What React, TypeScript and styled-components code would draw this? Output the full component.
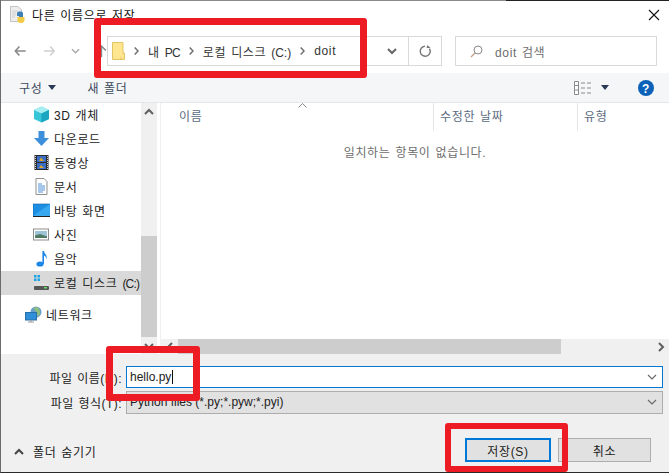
import React from 'react';
import styled, { createGlobalStyle } from 'styled-components';

const GlobalStyle = createGlobalStyle`
  html, body {
    margin: 0;
    padding: 0;
    background: #fff;
  }
  * {
    box-sizing: border-box;
  }
`;

const Dialog = styled.div`
  position: relative;
  width: 669px;
  height: 473px;
  overflow: hidden;
  display: flex;
  flex-direction: column;
  background: #fff;
  border-left: 1px solid #6b6b6b;
  border-bottom: 1px solid #2a2a2a;
  font-family: 'Liberation Sans', 'Noto Sans CJK KR', sans-serif;
  font-size: 12px;
  letter-spacing: 0.65px;
  word-spacing: 1px;
  color: #1a1a1a;
`;

const TopEdge = styled.div`
  height: 1px;
  flex: none;
  background: linear-gradient(to right, #8a8a8a 505px, #222 505px);
`;

const TitleBar = styled.div`
  height: 34px;
  flex: none;
  display: flex;
  align-items: center;
  padding: 0 9px 7px 8px;
  gap: 6px;
`;

const TitleText = styled.span`
  flex: 1;
  color: #111;
`;

const NavRow = styled.div`
  height: 38px;
  flex: none;
  display: flex;
  align-items: flex-start;
  padding: 1px 12px 0 13px;
`;

const NavButtons = styled.div`
  width: 93px;
  height: 30px;
  flex: none;
  display: flex;
  align-items: center;
  gap: 16px;
`;

const AddressBar = styled.div`
  width: 335px;
  height: 30px;
  flex: none;
  display: flex;
  align-items: stretch;
  border: 1px solid #d9d9d9;
`;

const Crumbs = styled.div`
  flex: 1;
  display: flex;
  align-items: center;
  padding-left: 4px;
  gap: 9px;
  color: #333;
`;

// latin bits of a korean label sit tighter than the hangul around them
const Latin = styled.span<{ $tight?: boolean }>`
  letter-spacing: ${(p) => (p.$tight ? '-0.8px' : '0')};
`;

const AddressButton = styled.div<{ $divided?: boolean }>`
  width: 33px;
  display: flex;
  align-items: center;
  justify-content: center;
  border-left: ${(p) => (p.$divided ? '1px solid #d9d9d9' : 'none')};
`;

const SearchBox = styled.div`
  width: 202px;
  height: 30px;
  margin-left: 13px;
  flex: none;
  display: flex;
  align-items: center;
  padding-left: 14px;
  gap: 12px;
  border: 1px solid #d9d9d9;
  color: #6d6d6d;
`;

const Toolbar = styled.div`
  height: 30px;
  flex: none;
  display: flex;
  align-items: center;
  padding: 0 15px 0 18px;
  background: #f5f6f7;
  border-bottom: 1px solid #e6e6e6;
  color: #3b4a5e;
`;

const ToolLabel = styled.span`
  display: flex;
  align-items: center;
  gap: 6px;
`;

const NewFolder = styled.span`
  margin-left: 31px;
  flex: 1;
`;

const Browser = styled.div`
  height: 251px;
  flex: none;
  display: flex;
  position: relative;
`;

const Sidebar = styled.div`
  width: 140px;
  flex: none;
  display: flex;
  flex-direction: column;
`;

const NavItem = styled.div<{ $selected?: boolean; $top?: boolean }>`
  height: 24px;
  flex: none;
  display: flex;
  align-items: center;
  gap: 4px;
  padding-bottom: 2px;
  padding-left: ${(p) => (p.$top ? '24px' : '32px')};
  margin-top: ${(p) => (p.$top ? '8px' : '0')};
  background: ${(p) => (p.$selected ? '#d9d9d9' : 'transparent')};
  color: #222;
  white-space: nowrap;
  overflow: hidden;
`;

const NavIcon = styled.span`
  width: 17px;
  height: 17px;
  flex: none;
  display: block;
`;

const ScrollTrack = styled.div`
  width: 16px;
  flex: none;
  display: flex;
  flex-direction: column;
  background: #f0f0f0;
`;

const ScrollArrow = styled.div`
  height: 17px;
  flex: none;
  display: flex;
  align-items: center;
  justify-content: center;
`;

const ScrollGap = styled.div`
  height: 116px;
  flex: none;
`;

const ScrollThumb = styled.div`
  flex: 1;
  background: #cdcdcd;
`;

const Splitter = styled.div`
  width: 4px;
  flex: none;
  background: #fff;
  border-right: 1px solid #f0f0f0;
`;

const ListPane = styled.div`
  flex: 1;
  display: flex;
  flex-direction: column;
  position: relative;
`;

const ListHeader = styled.div`
  height: 28px;
  flex: none;
  display: grid;
  grid-template-columns: 272px 144px 1fr;
  position: relative;
  color: #5b6b7f;
`;

const HeaderCell = styled.div<{ $first?: boolean }>`
  display: flex;
  align-items: center;
  padding: 0 0 3px ${(p) => (p.$first ? '18px' : '6px')};
  border-left: ${(p) => (p.$first ? 'none' : '1px solid #e5e5e5')};
`;

const SortMark = styled.svg`
  position: absolute;
  left: 137px;
  top: 0;
`;

const EmptyNote = styled.div`
  text-align: center;
  padding-top: 12px;
  color: #6d6d6d;
`;

const HScroll = styled.div`
  position: absolute;
  left: 0;
  right: 0;
  bottom: 0;
  height: 15px;
  display: flex;
  background: #f0f0f0;
`;

const HArrow = styled.div`
  width: 17px;
  flex: none;
  display: flex;
  align-items: center;
  justify-content: center;
`;

const HThumb = styled.div`
  width: 383px;
  flex: none;
  background: #cdcdcd;
`;

const HFill = styled.div`
  flex: 1;
`;

const Footer = styled.div`
  flex: 1;
  background: #f0f0f0;
  display: flex;
  flex-direction: column;
  padding-top: 12px;
`;

const FieldRow = styled.div`
  height: 22px;
  margin-bottom: 3px;
  flex: none;
  display: flex;
  align-items: center;
  padding-right: 6px;
`;

const FieldLabel = styled.label`
  width: 125px;
  flex: none;
  padding-right: 4px;
  text-align: right;
  letter-spacing: 0.45px;
  color: #222;
`;

const FieldBox = styled.div<{ $active?: boolean }>`
  flex: 1;
  height: ${(p) => (p.$active ? '22px' : '23px')};
  display: flex;
  align-items: center;
  justify-content: space-between;
  padding: 0 5px 0 3px;
  border: 1px solid ${(p) => (p.$active ? '#0078d7' : '#adadad')};
  background: ${(p) => (p.$active ? '#fff' : '#e1e1e1')};
  color: #222;
  letter-spacing: 0;
  word-spacing: 0;
`;

const Caret = styled.span`
  display: inline-block;
  width: 1px;
  height: 14px;
  margin-left: 1px;
  vertical-align: -3px;
  background: #111;
`;

const FooterBar = styled.div`
  flex: 1;
  display: flex;
  align-items: flex-start;
  justify-content: space-between;
  padding: 22px 18px 0 13px;
`;

const HideFolders = styled.div`
  display: flex;
  align-items: center;
  gap: 9px;
  height: 28px;
  padding-bottom: 1px;
  color: #222;
`;

const Buttons = styled.div`
  display: flex;
  gap: 7px;
`;

const DialogButton = styled.button<{ $primary?: boolean }>`
  width: ${(p) => (p.$primary ? '86px' : '93px')};
  height: 24px;
  padding: 0;
  background: #e1e1e1;
  border: ${(p) => (p.$primary ? '2px solid #0078d7' : '1px solid #adadad')};
  font: inherit;
  letter-spacing: inherit;
  color: #222;
`;

const Highlight = styled.div<{ $x: number; $y: number; $w: number; $h: number; $b: number }>`
  position: absolute;
  left: ${(p) => p.$x}px;
  top: ${(p) => p.$y}px;
  width: ${(p) => p.$w}px;
  height: ${(p) => p.$h}px;
  border: ${(p) => p.$b}px solid #ed1c24;
  border-radius: 3px;
  pointer-events: none;
`;

const Chevron = ({ dir, color = '#555', weight = 1.6 }: { dir: 'down' | 'up' | 'left' | 'right'; color?: string; weight?: number }) => {
  const paths = {
    down: 'M1 3 L5 7 L9 3',
    up: 'M1 7 L5 3 L9 7',
    left: 'M7 1 L3 5 L7 9',
    right: 'M3 1 L7 5 L3 9',
  };
  return (
    <svg width="10" height="10" viewBox="0 0 10 10">
      <path d={paths[dir]} fill="none" stroke={color} strokeWidth={weight} />
    </svg>
  );
};

const CrumbArrow = () => (
  <svg width="5" height="8" viewBox="0 0 5 8">
    <path d="M.7 .5L4 4L.7 7.5" fill="none" stroke="#707070" strokeWidth="1.5" />
  </svg>
);

const FolderIcon = () => (
  <svg width="13" height="18" viewBox="0 0 13 18">
    <path d="M0.5 0.5H11V17.5H0.5Z" fill="#fde68f" stroke="#e3c463" />
    <path d="M11 11H12.5V17.5H9V15" fill="#fde68f" stroke="#e3c463" />
  </svg>
);

const PythonDocIcon = () => (
  <svg width="17" height="18" viewBox="0 0 17 18">
    <path d="M1.5 .5H9L12.5 4V15.5H1.5Z" fill="#eeeeee" stroke="#c4c4c4" />
    <path d="M3 5H9M3 7H7M3 9H7M3 11H6" stroke="#d0d0d0" />
    <path d="M8 10V7.5C8 6 9 5.5 11 5.5C13 5.5 14 6 14 7.5V11H10V10Z" fill="#3f7fb5" />
    <path d="M8 11H15.5V14C15.5 16 14 17 12 17C10 17 8.5 16 8.5 15V12Z" fill="#f3cb45" />
  </svg>
);

const Cube = () => (
  <svg width="17" height="17" viewBox="0 0 17 17">
    <path d="M8.5 .5L16 4V13L8.5 16.5L1 13V4Z" fill="#37c5d8" />
    <path d="M8.5 .5L16 4L8.5 7.5L1 4Z" fill="#a7eef3" />
    <path d="M8.5 7.5L16 4V13L8.5 16.5Z" fill="#1aa5c0" />
  </svg>
);

const DownArrow = () => (
  <svg width="17" height="17" viewBox="0 0 17 17">
    <path d="M5.5 1H11.5V8H16L8.5 16L1 8H5.5Z" fill="#3d8fdc" />
  </svg>
);

const Film = () => (
  <svg width="17" height="17" viewBox="0 0 17 17">
    <rect x="1.5" y="1" width="14" height="15" fill="#2a2a2a" />
    <rect x="4" y="2" width="9" height="6" fill="#3b6dc4" />
    <rect x="4" y="9" width="9" height="6" fill="#3b6dc4" />
    <path d="M6 7L8 3.5L11 7Z M6 14L8 11L11 14Z" fill="#d8a52c" />
    <path d="M2.5 2V15M14.5 2V15" stroke="#cfcfcf" strokeDasharray="1 1" />
  </svg>
);

const Doc = () => (
  <svg width="17" height="17" viewBox="0 0 17 17">
    <path d="M3 .5H11L14 3.5V16.5H3Z" fill="#fff" stroke="#8f8f8f" />
    <path d="M5 6H9M5 8H12M5 10H12M5 12H12M5 14H10" stroke="#4c8fd6" />
  </svg>
);

const Desktop = () => (
  <svg width="17" height="17" viewBox="0 0 17 17">
    <rect x="0" y="2" width="17" height="12" fill="#1c8fe3" stroke="#0d5fa8" strokeWidth=".6" />
    <path d="M0 14L17 2V14Z" fill="#38a8f0" />
    <rect x="0" y="14" width="17" height="1" fill="#222" />
  </svg>
);

const Photo = () => (
  <svg width="17" height="17" viewBox="0 0 17 17">
    <rect x=".5" y="3" width="15" height="11" fill="#fff" stroke="#8e8e8e" />
    <rect x="2" y="5" width="12" height="7" fill="#9cc3d8" />
    <path d="M2 12V9.5L7 8L14 10.5V12Z" fill="#4f7a63" />
  </svg>
);

const Note = () => (
  <svg width="17" height="17" viewBox="0 0 17 17">
    <ellipse cx="7" cy="14" rx="3.6" ry="2.6" fill="#1b87e6" />
    <path d="M9.4 14V1H11C11.3 4 14.5 5 13.6 9C13 6.5 12 6 11 5.5V14Z" fill="#1b87e6" />
  </svg>
);

const Disk = () => (
  <svg width="17" height="17" viewBox="0 0 17 17">
    <path d="M1 1H3.5V3.5H1ZM4.5 1H7V3.5H4.5ZM1 4.5H3.5V7H1ZM4.5 4.5H7V7H4.5Z" fill="#1aa3e8" />
    <path d="M3 9H14L16 12H1Z" fill="#dedede" />
    <rect x="1" y="12" width="15" height="4" rx="1" fill="#555" />
    <rect x="11" y="13" width="3" height="1.5" fill="#5fe05f" />
  </svg>
);

const Network = () => (
  <svg width="17" height="17" viewBox="0 0 17 17">
    <circle cx="11" cy="6" r="5.5" fill="#6c9fc7" />
    <path d="M8 2C11 4 12 6 9 9L14 10C16 6 15 3 12 1Z" fill="#8fbf7d" />
    <rect x=".5" y="6.5" width="11" height="7.5" fill="#2f8fd8" stroke="#2a6ea8" />
    <path d="M6 14V16M3 16H9" stroke="#9a9a9a" />
  </svg>
);

const navItems = [
  { label: <>3D 개체</>, icon: <Cube /> },
  { label: <>다운로드</>, icon: <DownArrow /> },
  { label: <>동영상</>, icon: <Film /> },
  { label: <>문서</>, icon: <Doc /> },
  { label: <>바탕 화면</>, icon: <Desktop /> },
  { label: <>사진</>, icon: <Photo /> },
  { label: <>음악</>, icon: <Note /> },
  { label: <>로컬 디스크 <Latin $tight>(C:)</Latin></>, icon: <Disk />, selected: true },
];

export default function App() {
  return (
    <>
      <GlobalStyle />
      <Dialog>
        <TopEdge />
        <TitleBar>
          <PythonDocIcon />
          <TitleText>다른 이름으로 저장</TitleText>
          <svg width="12" height="12" viewBox="0 0 12 12">
            <path d="M1 1L11 11M11 1L1 11" stroke="#111" strokeWidth="1.1" />
          </svg>
        </TitleBar>

        <NavRow>
          <NavButtons>
            <svg width="14" height="12" viewBox="0 0 14 12">
              <path d="M6 1L1.5 6L6 11M2 6H13" fill="none" stroke="#8a8a8a" strokeWidth="1.8" />
            </svg>
            <svg width="14" height="12" viewBox="0 0 14 12">
              <path d="M8 1L12.5 6L8 11M12 6H1" fill="none" stroke="#cfcfcf" strokeWidth="1.8" />
            </svg>
            <Chevron dir="down" color="#aaa" />
            <svg width="12" height="14" viewBox="0 0 12 14">
              <path d="M1 6.5L6 1.5L11 6.5M6 2V14" fill="none" stroke="#8a8a8a" strokeWidth="1.8" />
            </svg>
          </NavButtons>
          <AddressBar>
            <Crumbs>
              <FolderIcon />
              <CrumbArrow />
              <span>내 <Latin $tight>PC</Latin></span>
              <CrumbArrow />
              <span>로컬 디스크 <Latin>(C:)</Latin></span>
              <CrumbArrow />
              <span>doit</span>
            </Crumbs>
            <AddressButton>
              <Chevron dir="down" color="#666" weight={2} />
            </AddressButton>
            <AddressButton $divided>
              <svg width="13" height="13" viewBox="0 0 13 13">
                <path d="M3 2.5A5 5 0 1 0 8 1.8" fill="none" stroke="#777" strokeWidth="1.4" transform="rotate(35 6.5 6.5)" />
                <path d="M8.5 0L11.5 3H7.5Z" fill="#777" />
              </svg>
            </AddressButton>
          </AddressBar>
          <SearchBox>
            <svg width="13" height="13" viewBox="0 0 13 13">
              <circle cx="8" cy="5" r="4" fill="none" stroke="#888" />
              <path d="M5 8L1 12" stroke="#c79a86" strokeWidth="1.2" />
            </svg>
            <span>doit 검색</span>
          </SearchBox>
        </NavRow>

        <Toolbar>
          <ToolLabel>
            구성
            <svg width="8" height="5" viewBox="0 0 8 5">
              <path d="M0 0H8L4 5Z" fill="#2a3a55" />
            </svg>
          </ToolLabel>
          <NewFolder>새 폴더</NewFolder>
          <svg width="17" height="14" viewBox="0 0 17 14">
            <path d="M.5 .5H4.5V13.5H.5ZM.5 4.5H4.5M.5 9H4.5" fill="#fff" stroke="#8a8a8a" />
            <path d="M7 2H11M13 2H17M7 7H11M13 7H17M7 12H11M13 12H17" stroke="#8a8a8a" />
          </svg>
          <svg width="8" height="5" viewBox="0 0 8 5" style={{ marginLeft: 10 }}>
            <path d="M0 0H8L4 5Z" fill="#2a3a55" />
          </svg>
          <svg width="16" height="16" viewBox="0 0 16 16" style={{ marginLeft: 29 }}>
            <circle cx="8" cy="8" r="8" fill="#0b62b8" />
            <text x="8" y="12.5" textAnchor="middle" fontSize="12" fontWeight="700" fill="#fff" fontFamily="Liberation Sans">?</text>
          </svg>
        </Toolbar>

        <Browser>
          <Sidebar>
            {navItems.map((item, i) => (
              <NavItem key={i} $selected={item.selected}>
                <NavIcon>{item.icon}</NavIcon>
                <span>{item.label}</span>
              </NavItem>
            ))}
            <NavItem $top>
              <NavIcon>
                <Network />
              </NavIcon>
              <span>네트워크</span>
            </NavItem>
          </Sidebar>
          <ScrollTrack>
            <ScrollArrow>
              <Chevron dir="up" color="#606060" weight={2} />
            </ScrollArrow>
            <ScrollGap />
            <ScrollThumb />
            <ScrollArrow>
              <Chevron dir="down" color="#606060" weight={2} />
            </ScrollArrow>
          </ScrollTrack>
          <Splitter />
          <ListPane>
            <ListHeader>
              <HeaderCell $first>이름</HeaderCell>
              <HeaderCell>수정한 날짜</HeaderCell>
              <HeaderCell>유형</HeaderCell>
              <SortMark width="9" height="5" viewBox="0 0 9 5">
                <path d="M.5 4.5L4.5 .5L8.5 4.5" fill="none" stroke="#888" />
              </SortMark>
            </ListHeader>
            <EmptyNote>일치하는 항목이 없습니다.</EmptyNote>
            <HScroll>
              <HArrow>
                <Chevron dir="left" color="#606060" weight={2} />
              </HArrow>
              <HThumb />
              <HFill />
              <HArrow>
                <Chevron dir="right" color="#606060" weight={2} />
              </HArrow>
            </HScroll>
          </ListPane>
        </Browser>

        <Footer>
          <FieldRow>
            <FieldLabel>파일 이름(N):</FieldLabel>
            <FieldBox $active>
              <span>
                hello.py
                <Caret />
              </span>
              <Chevron dir="down" color="#666" weight={1.1} />
            </FieldBox>
          </FieldRow>
          <FieldRow>
            <FieldLabel>파일 형식(T):</FieldLabel>
            <FieldBox>
              <span>Python files (*.py;*.pyw;*.pyi)</span>
              <Chevron dir="down" color="#666" weight={1.1} />
            </FieldBox>
          </FieldRow>
          <FooterBar>
            <HideFolders>
              <Chevron dir="up" color="#444" weight={2} />
              폴더 숨기기
            </HideFolders>
            <Buttons>
              <DialogButton $primary>저장(S)</DialogButton>
              <DialogButton>취소</DialogButton>
            </Buttons>
          </FooterBar>
        </Footer>

        <Highlight $x={93} $y={18} $w={273} $h={60} $b={7} />
        <Highlight $x={105} $y={346} $w={94} $h={55} $b={7} />
        <Highlight $x={444} $y={423} $w={123} $h={49} $b={6} />
      </Dialog>
    </>
  );
}
